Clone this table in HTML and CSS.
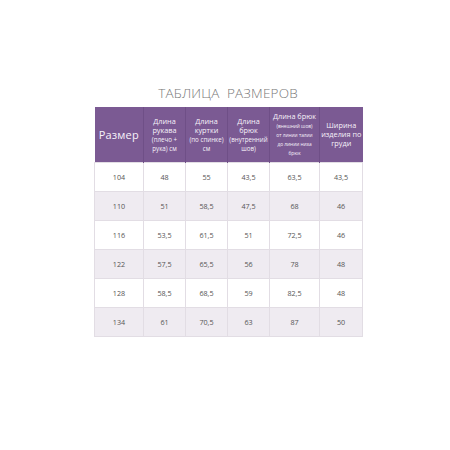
FILE: index.html
```html
<!DOCTYPE html>
<html lang="ru">
<head>
<meta charset="utf-8">
<link rel="stylesheet" href="styles.css">
</head>
<body>
<div class="wrap">
  <h1 class="title">ТАБЛИЦА&nbsp; РАЗМЕРОВ</h1>
  <table class="sizes">
    <colgroup>
      <col class="c1"><col class="c2"><col class="c3"><col class="c4"><col class="c5"><col class="c6">
    </colgroup>
    <thead>
      <tr>
        <th class="big">Размер</th>
        <th>Длина<br>рукава<br><span class="sm">(плечо +<br>рука) см</span></th>
        <th>Длина<br>куртки<br><span class="sm">(по спинке)<br>см</span></th>
        <th>Длина<br>брюк<br><span class="sm">(внутренний<br>шов)</span></th>
        <th>Длина брюк<br><span class="xs">(внешний шов)<br>от линии талии<br>до линии низа<br>брюк</span></th>
        <th>Ширина<br>изделия по<br>груди</th>
      </tr>
    </thead>
    <tbody>
      <tr><td>104</td><td>48</td><td>55</td><td>43,5</td><td>63,5</td><td>43,5</td></tr>
      <tr class="alt"><td>110</td><td>51</td><td>58,5</td><td>47,5</td><td>68</td><td>46</td></tr>
      <tr><td>116</td><td>53,5</td><td>61,5</td><td>51</td><td>72,5</td><td>46</td></tr>
      <tr class="alt"><td>122</td><td>57,5</td><td>65,5</td><td>56</td><td>78</td><td>48</td></tr>
      <tr><td>128</td><td>58,5</td><td>68,5</td><td>59</td><td>82,5</td><td>48</td></tr>
      <tr class="alt"><td>134</td><td>61</td><td>70,5</td><td>63</td><td>87</td><td>50</td></tr>
    </tbody>
  </table>
</div>
</body>
</html>
```
FILE: styles.css
```css
html, body {
  margin: 0;
  padding: 0;
  background: #ffffff;
}
body {
  font-family: "Open Sans", "Liberation Sans", sans-serif;
}
.wrap {
  width: 268px;
  margin-left: 94px;
  padding-top: 84px;
}
.title {
  margin: 0 0 5px 0;
  font-family: "Open Sans", "Liberation Sans", sans-serif;
  font-weight: 300;
  font-size: 13.5px;
  line-height: 18px;
  letter-spacing: 0.2px;
  color: #777777;
  text-align: center;
}
.sizes {
  width: 268px;
  table-layout: fixed;
  border-collapse: collapse;
}
.c1 { width: 49px; }
.c2 { width: 42px; }
.c3 { width: 42px; }
.c4 { width: 42px; }
.c5 { width: 50px; }
.c6 { width: 43px; }
.sizes th {
  background: #7b5a93;
  color: #f7f2fa;
  font-weight: 400;
  font-size: 7.3px;
  line-height: 9px;
  height: 55px;
  padding: 0;
  text-align: center;
  vertical-align: middle;
  border-right: 1px solid #6f4f87;
  white-space: nowrap;
}
.sizes th:last-child { border-right: none; }
.sizes th.big {
  font-size: 11px;
  letter-spacing: 0.2px;
}
.sizes .sm {
  font-size: 6.2px;
}
.sizes .xs {
  font-size: 4.8px;
  line-height: 7px;
}
.sizes td {
  height: 28px;
  padding: 0;
  text-align: center;
  vertical-align: middle;
  font-size: 7.2px;
  color: #555555;
  border: 1px solid #e2dde4;
}
.sizes tr.alt td {
  background: #efebf1;
}
```
